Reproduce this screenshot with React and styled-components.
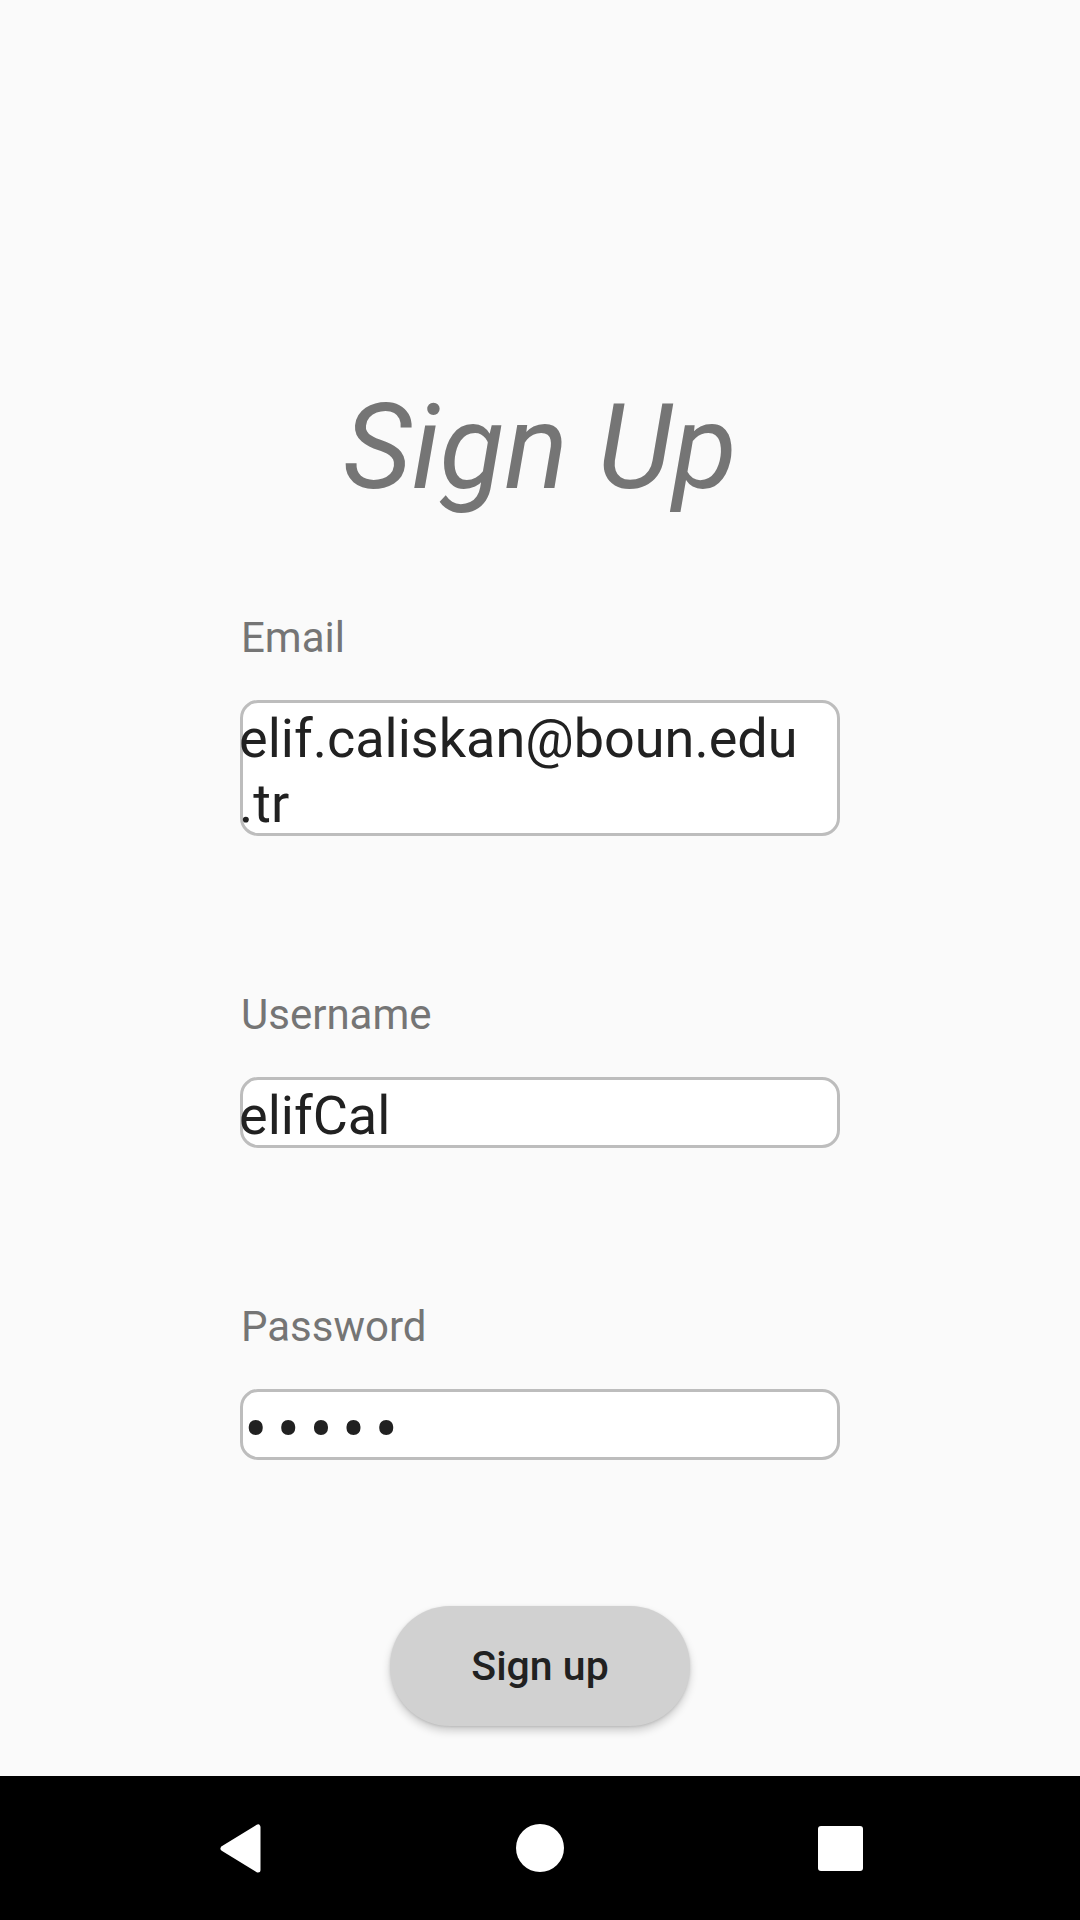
import React from 'react';
import styled, { createGlobalStyle } from 'styled-components';

const GlobalStyle = createGlobalStyle`
  html, body {
    margin: 0;
    padding: 0;
    background: #fafafa;
    font-family: Roboto, "Liberation Sans", sans-serif;
  }
  * {
    box-sizing: border-box;
  }
`;

const fields = [
  { label: 'Email', value: 'elif.caliskan@boun.edu\n.tr' },
  { label: 'Username', value: 'elifCal' },
  { label: 'Password', value: '•••••', secret: true },
];

const App = () => {
  return (
    <Screen>
      <GlobalStyle />
      <Content>
        <Title>Sign Up</Title>
        <Form>
          {fields.map((field) => (
            <Field key={field.label}>
              <Label>{field.label}</Label>
              <InputBox>
                {field.secret ? (
                  <Dots>{field.value}</Dots>
                ) : (
                  <Value>{field.value}</Value>
                )}
              </InputBox>
            </Field>
          ))}
        </Form>
        <SubmitButton type="button">Sign up</SubmitButton>
      </Content>
      <NavBar>
        <NavItem>
          <svg width="42" height="49" viewBox="0 0 42 49">
            <polygon
              points="39,3 39,46 4,24.5"
              fill="#fff"
              stroke="#fff"
              strokeWidth="5"
              strokeLinejoin="round"
            />
          </svg>
        </NavItem>
        <NavItem>
          <svg width="48" height="48" viewBox="0 0 48 48">
            <circle cx="24" cy="24" r="24" fill="#fff" />
          </svg>
        </NavItem>
        <NavItem>
          <svg width="45" height="45" viewBox="0 0 45 45">
            <rect x="0" y="0" width="45" height="45" rx="3" fill="#fff" />
          </svg>
        </NavItem>
      </NavBar>
    </Screen>
  );
};

export default App;

// styled component

const Screen = styled.div`
  width: 1080px;
  height: 1920px;
  display: flex;
  flex-direction: column;
  background: #fafafa;
  overflow: hidden;
`;

const Content = styled.main`
  flex: 1;
  display: flex;
  flex-direction: column;
  align-items: center;
  padding-top: 388px;
`;

const Title = styled.h1`
  margin: 0;
  font-size: 119px;
  line-height: 119px;
  font-style: italic;
  font-weight: 400;
  color: #757575;
`;

const Form = styled.form`
  width: 600px;
  margin-top: 110px;
  display: flex;
  flex-direction: column;
  gap: 158px;
`;

const Field = styled.div`
  display: flex;
  flex-direction: column;
`;

const Label = styled.label`
  font-size: 42px;
  line-height: 42px;
  color: #757575;
  margin-bottom: 41px;
  padding-left: 1px;
`;

const InputBox = styled.div`
  background: #ffffff;
  border: 3px solid #bdbdbd;
  border-radius: 18px;
  min-height: 71px;
`;

const Value = styled.div`
  margin: 0 -4px -3px;
  padding-top: 3px;
  font-size: 54px;
  line-height: 65px;
  color: #212121;
  white-space: pre-wrap;
`;

const Dots = styled.div`
  margin-left: 1px;
  margin-bottom: -5px;
  padding-top: 5px;
  font-size: 70px;
  line-height: 65px;
  letter-spacing: 9px;
  color: #212121;
`;

const SubmitButton = styled.button`
  margin-top: 146px;
  width: 300px;
  height: 120px;
  border: none;
  border-radius: 60px;
  background: #d1d1d1;
  color: #212121;
  font-family: Roboto, "Liberation Sans", sans-serif;
  font-size: 41px;
  font-weight: 500;
  box-shadow: 0 5px 8px rgba(0, 0, 0, 0.18), 0 1px 3px rgba(0, 0, 0, 0.12);
  cursor: pointer;
`;

const NavBar = styled.nav`
  height: 144px;
  flex-shrink: 0;
  background: #000;
  display: grid;
  grid-template-columns: repeat(3, 300px);
  justify-content: center;
  align-items: center;
`;

const NavItem = styled.div`
  display: flex;
  justify-content: center;
  align-items: center;
`;
